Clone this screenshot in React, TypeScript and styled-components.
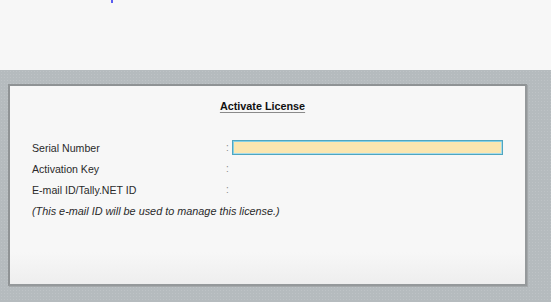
import * as React from "react";
import styled, { createGlobalStyle } from "styled-components";

const GlobalStyle = createGlobalStyle`
    html, body {
        margin: 0;
        padding: 0;
        background: #f7f7f7;
    }
    body {
        font-family: 'Liberation Sans', Arial, sans-serif;
        color: #222;
    }
`

const Page = styled.div`
    width: 551px;
    height: 302px;
    display: flex;
    flex-direction: column;
    overflow: hidden;
`

const TopArea = styled.div`
    height: 70px;
    background: #f7f7f7;
    padding-left: 111px;
    box-sizing: border-box;
`

const Caret = styled.span`
    display: block;
    width: 2px;
    height: 3px;
    background: #5a5cf0;
`

const Band = styled.div`
    flex: 1;
    background-color: #b5bbbe;
    background-image: radial-gradient(rgba(255, 255, 255, 0.12) 0.6px, transparent 0.8px);
    background-size: 3px 3px;
    padding: 14px 24px 16px 8px;
    display: flex;
`

const Panel = styled.section`
    flex: 1;
    background: linear-gradient(#f7f7f7 0%, #f7f7f7 84%, #eeeeee 100%);
    border-top: 2px solid #8f9395;
    border-left: 2px solid #8f9395;
    border-right: 2px solid #95999b;
    border-bottom: 2px solid #95999b;
    box-shadow: 1px 1px 0 #a4a8aa;
    padding: 13px 22px 0 22px;
    display: flex;
    flex-direction: column;
`

const Title = styled.h1`
    margin: 0 0 0 -10px;
    text-align: center;
    font-size: 10.8px;
    line-height: 14px;
    font-weight: 700;
    color: #111;
    text-decoration: underline;
    text-decoration-color: #8a8a8a;
    text-underline-offset: 2px;
`

const Form = styled.div`
    margin-top: 24px;
    display: grid;
    grid-template-columns: 194px 6px 271px;
    grid-auto-rows: 21px;
    align-items: center;
    font-size: 10.6px;
    color: #2a2a2a;
`

const Label = styled.span`
    white-space: nowrap;
`

const Colon = styled.span`
    color: #8a8a8a;
    font-size: 10px;
`

const Field = styled.input<{ $active?: boolean }>`
    height: 15px;
    width: 100%;
    box-sizing: border-box;
    margin: 0;
    padding: 0 4px;
    font: inherit;
    border: 1px solid ${p => (p.$active ? "#4fa6c0" : "transparent")};
    box-shadow: ${p => (p.$active ? "inset 1px 1px 0 #86d0e4, inset -1px -1px 0 #a9dcea" : "none")};
    background: ${p => (p.$active ? "#fbe6b0" : "transparent")};
    outline: none;
`

const Note = styled.span`
    grid-column: 1 / -1;
    font-style: italic;
    font-size: 10.85px;
    white-space: nowrap;
`

const rows = [
    { label: "Serial Number", active: true },
    { label: "Activation Key", active: false },
    { label: "E-mail ID/Tally.NET ID", active: false },
]

export default function App() {
    return (
        <Page>
            <GlobalStyle />
            <TopArea>
                <Caret />
            </TopArea>
            <Band>
                <Panel>
                    <Title>Activate License</Title>
                    <Form>
                        {rows.map(row => (
                            <React.Fragment key={row.label}>
                                <Label>{row.label}</Label>
                                <Colon>:</Colon>
                                <Field $active={row.active} readOnly />
                            </React.Fragment>
                        ))}
                        <Note>(This e-mail ID will be used to manage this license.)</Note>
                    </Form>
                </Panel>
            </Band>
        </Page>
    )
}
